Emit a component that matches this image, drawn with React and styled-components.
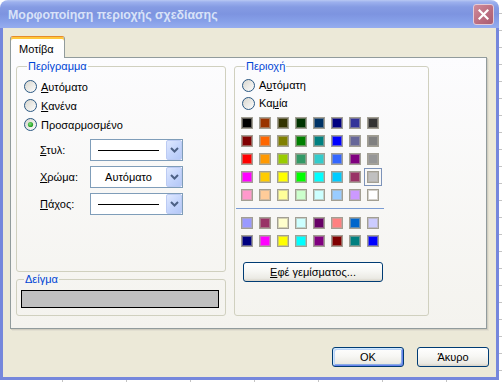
import React from 'react';
import styled, { createGlobalStyle, css } from 'styled-components';

const Global = createGlobalStyle`
  html, body { margin: 0; padding: 0; }
  body {
    background: #fff;
    font-family: "Liberation Sans", Arial, sans-serif;
    font-size: 11px;
    color: #000;
  }
`;

const Desktop = styled.div`
  width: 502px;
  height: 382px;
  overflow: hidden;
  background-color: #fff;
  background-image:
    repeating-linear-gradient(90deg, transparent 0 63px, #c4c4c4 63px 64px),
    repeating-linear-gradient(180deg, transparent 0 16px, #c4c4c4 16px 17px);
  background-position: -1px 0, 0 -3px;
`;

const Window = styled.div`
  width: 499px;
  height: 380px;
  display: flex;
  flex-direction: column;
`;

const TitleBar = styled.div`
  height: 28px;
  flex: none;
  box-sizing: border-box;
  border-radius: 8px 8px 0 0;
  background: linear-gradient(
    180deg,
    #b9c8f3 0px,
    #9db1ee 2px,
    #859be3 7px,
    #7d94e0 14px,
    #869fe8 21px,
    #96adef 28px
  );
  display: flex;
  align-items: center;
  justify-content: space-between;
  padding: 1px 5px 0 8px;
`;

const Title = styled.span`
  font-family: "Liberation Sans", Arial, sans-serif;
  font-weight: bold;
  font-size: 12.4px;
  color: #d8e2f8;
  white-space: nowrap;
`;

const CloseButton = styled.div`
  width: 21px;
  height: 21px;
  box-sizing: border-box;
  border: 1px solid #e4cbd6;
  border-radius: 3px;
  background: linear-gradient(135deg, #d08c9b 0%, #b96b7e 60%, #a85e72 100%);
  display: flex;
  align-items: center;
  justify-content: center;
`;

const Frame = styled.div`
  flex: 1;
  background: #ece9d8;
  border: 3px solid #7587dc;
  border-top: none;
  display: flex;
  flex-direction: column;
  padding: 8px 9px 0 7px;
`;

const TabStrip = styled.div`
  display: flex;
`;

const Tab = styled.div`
  position: relative;
  z-index: 1;
  width: 55px;
  height: 22px;
  margin-bottom: -1px;
  box-sizing: border-box;
  padding: 3px 0 0 8px;
  display: flex;
  align-items: center;
  background: linear-gradient(180deg, #ffffff, #fcfcfe);
  border: 1px solid #919b9c;
  border-bottom: none;
  border-top: 1px solid #e68b2c;
  border-radius: 3px 3px 0 0;
  box-shadow: inset 0 2px 0 #ffc83c;
`;

const Panel = styled.div`
  width: 477px;
  height: 272px;
  box-sizing: border-box;
  border: 1px solid #919b9c;
  background: linear-gradient(180deg, #fcfcfe 0%, #f4f3ee 100%);
  box-shadow: 1px 1px 0 #d0cdc0, 2px 2px 0 #e2dfd1;
  display: flex;
  gap: 8px;
  padding: 2px 0 0 5px;
`;

const Column = styled.div`
  width: 210px;
  display: flex;
  flex-direction: column;
  gap: 1px;
`;

const Group = styled.fieldset`
  margin: 0;
  min-width: 0;
  box-sizing: border-box;
  width: ${(p) => p.$w}px;
  height: ${(p) => (p.$h ? `${p.$h}px` : 'auto')};
  border: 1px solid #d0d0bf;
  border-radius: 3px;
  padding: ${(p) => p.$pad};
  display: flex;
  flex-direction: column;
`;

const Legend = styled.legend`
  color: #0046d5;
  font-size: 11px;
  line-height: 13px;
  padding: 0 1px;
  margin-left: 3px;
`;

const RadioRow = styled.div`
  height: ${(p) => p.$h}px;
  display: flex;
  align-items: center;
  gap: 4px;
`;

const Key = styled.u`
  text-decoration: underline;
  text-underline-offset: 1px;
`;

const FieldRow = styled.div`
  display: flex;
  align-items: center;
  height: 22px;
  padding-left: 16px;
  margin-top: ${(p) => p.$mt}px;
`;

const FieldLabel = styled.span`
  width: 50px;
`;

const Combo = styled.div`
  width: 93px;
  height: 22px;
  box-sizing: border-box;
  border: 1px solid #7f9db9;
  background: #fff;
  display: flex;
`;

const ComboValue = styled.div`
  flex: 1;
  display: flex;
  align-items: center;
  justify-content: center;
`;

const LineSample = styled.div`
  width: 61px;
  height: 1px;
  background: #000;
`;

const ComboButton = styled.div`
  width: 16px;
  height: 20px;
  box-sizing: border-box;
  border: 1px solid #bccbf3;
  border-radius: 2px;
  background: linear-gradient(135deg, #dfe8fe 0%, #c6d6fc 50%, #b4c8f7 100%);
  display: flex;
  align-items: center;
  justify-content: center;
`;

const Sample = styled.div`
  width: 198px;
  height: 18px;
  box-sizing: border-box;
  border: 1px solid #000;
  background: #c0c0c0;
`;

const Swatches = styled.div`
  display: grid;
  grid-template-columns: repeat(8, 12px);
  grid-auto-rows: 12px;
  gap: 6px;
  margin-left: -1px;
  margin-top: ${(p) => p.$mt}px;
`;

const Swatch = styled.div`
  width: 12px;
  height: 12px;
  box-sizing: border-box;
  border: 1px solid #a29f93;
  box-shadow: inset 0 0 0 1px rgba(176, 172, 160, 0.55);
  background: ${(p) => p.$c};
  ${(p) =>
    p.$selected &&
    css`
      outline: 1px solid #7d93b9;
      outline-offset: 2px;
    `}
`;

const Separator = styled.div`
  width: 148px;
  height: 1px;
  background: #7a9cd3;
  margin: 7px 0 0 -6px;
`;

const Button = styled.button`
  box-sizing: border-box;
  width: ${(p) => p.$w}px;
  height: 20px;
  padding: 0;
  margin: 0;
  font-family: "Liberation Sans", Arial, sans-serif;
  font-size: 11px;
  color: #000;
  border: 1px solid #003c74;
  border-radius: 3px;
  background: linear-gradient(180deg, #ffffff 0%, #f7f7f4 45%, #ebeae4 85%, #d8d3c8 100%);
  ${(p) =>
    p.$default &&
    css`
      box-shadow: inset 1px 1px 0 #cee7ff, inset -1px -1px 0 #6982ee,
        inset 2px 2px 0 #bcd4f6, inset -2px -2px 0 #89ade4;
    `}
`;

const FillButton = styled(Button)`
  margin-top: 15px;
  margin-left: 1px;
`;

const Footer = styled.div`
  display: flex;
  justify-content: flex-end;
  gap: 13px;
  margin-top: 18px;
  margin-right: -2px;
`;

function Radio({ checked }) {
  return (
    <svg width="13" height="13" viewBox="0 0 13 13">
      <defs>
        <linearGradient id="rbg" x1="0" y1="0" x2="1" y2="1">
          <stop offset="0" stopColor="#d6d4cb" />
          <stop offset="1" stopColor="#ffffff" />
        </linearGradient>
        <radialGradient id="rdot" cx="0.4" cy="0.4" r="0.6">
          <stop offset="0" stopColor="#7ee07a" />
          <stop offset="1" stopColor="#1f9a1f" />
        </radialGradient>
      </defs>
      <circle cx="6.5" cy="6.5" r="6" fill="url(#rbg)" stroke="#2a5883" strokeWidth="1" />
      {checked && <circle cx="6.5" cy="6.5" r="2.6" fill="url(#rdot)" />}
    </svg>
  );
}

function Chevron() {
  return (
    <svg width="9" height="6" viewBox="0 0 9 6">
      <path d="M1 1 L4.5 4.5 L8 1" fill="none" stroke="#4d6185" strokeWidth="2" />
    </svg>
  );
}

function Select({ children }) {
  return (
    <Combo>
      <ComboValue>{children}</ComboValue>
      <ComboButton>
        <Chevron />
      </ComboButton>
    </Combo>
  );
}

const mainColors = [
  '#000000', '#993300', '#333300', '#003300', '#003366', '#000080', '#333399', '#333333',
  '#800000', '#FF6600', '#808000', '#008000', '#008080', '#0000FF', '#666699', '#808080',
  '#FF0000', '#FF9900', '#99CC00', '#339966', '#33CCCC', '#3366FF', '#800080', '#969696',
  '#FF00FF', '#FFCC00', '#FFFF00', '#00FF00', '#00FFFF', '#00CCFF', '#993366', '#C0C0C0',
  '#FF99CC', '#FFCC99', '#FFFF99', '#CCFFCC', '#CCFFFF', '#99CCFF', '#CC99FF', '#FFFFFF',
];

const chartColors = [
  '#9999FF', '#993366', '#FFFFCC', '#CCFFFF', '#660066', '#FF8080', '#0066CC', '#CCCCFF',
  '#000080', '#FF00FF', '#FFFF00', '#00FFFF', '#800080', '#800000', '#008080', '#0000FF',
];

export default function App() {
  return (
    <>
      <Global />
      <Desktop>
        <Window>
          <TitleBar>
            <Title>Μορφοποίηση περιοχής σχεδίασης</Title>
            <CloseButton>
              <svg width="11" height="11" viewBox="0 0 11 11">
                <path d="M1.5 1.5 L9.5 9.5 M9.5 1.5 L1.5 9.5" stroke="#fff" strokeWidth="2.2" strokeLinecap="square" />
              </svg>
            </CloseButton>
          </TitleBar>
          <Frame>
            <TabStrip>
              <Tab>Μοτίβα</Tab>
            </TabStrip>
            <Panel>
              <Column>
                <Group $w={210} $h={212} $pad="4px 0 0 7px">
                  <Legend>Περίγραμμα</Legend>
                  <RadioRow $h={19}>
                    <Radio />
                    <span><Key>Α</Key>υτόματο</span>
                  </RadioRow>
                  <RadioRow $h={19}>
                    <Radio />
                    <span><Key>Κ</Key>ανένα</span>
                  </RadioRow>
                  <RadioRow $h={19}>
                    <Radio checked />
                    <span>Προσαρμοσμένο</span>
                  </RadioRow>
                  <FieldRow $mt={5}>
                    <FieldLabel><Key>Σ</Key>τυλ:</FieldLabel>
                    <Select><LineSample /></Select>
                  </FieldRow>
                  <FieldRow $mt={5}>
                    <FieldLabel><Key>Χ</Key>ρώμα:</FieldLabel>
                    <Select>Αυτόματο</Select>
                  </FieldRow>
                  <FieldRow $mt={5}>
                    <FieldLabel><Key>Π</Key>άχος:</FieldLabel>
                    <Select><LineSample /></Select>
                  </FieldRow>
                </Group>
                <Group $w={210} $pad="4px 0 7px 4px">
                  <Legend>Δείγμα</Legend>
                  <Sample />
                </Group>
              </Column>
              <Group $w={195} $h={256} $pad="3px 0 0 7px">
                <Legend>Περιοχή</Legend>
                <RadioRow $h={18}>
                  <Radio />
                  <span>Α<Key>υ</Key>τόματη</span>
                </RadioRow>
                <RadioRow $h={18}>
                  <Radio />
                  <span>Κα<Key>μ</Key>ία</span>
                </RadioRow>
                <Swatches $mt={5}>
                  {mainColors.map((c, i) => (
                    <Swatch key={i} $c={c} $selected={i === 31} />
                  ))}
                </Swatches>
                <Separator />
                <Swatches $mt={8}>
                  {chartColors.map((c, i) => (
                    <Swatch key={i} $c={c} />
                  ))}
                </Swatches>
                <FillButton $w={140}>
                  <Key>Ε</Key>φέ γεμίσματος...
                </FillButton>
              </Group>
            </Panel>
            <Footer>
              <Button $w={72} $default>OK</Button>
              <Button $w={72}>Άκυρο</Button>
            </Footer>
          </Frame>
        </Window>
      </Desktop>
    </>
  );
}
